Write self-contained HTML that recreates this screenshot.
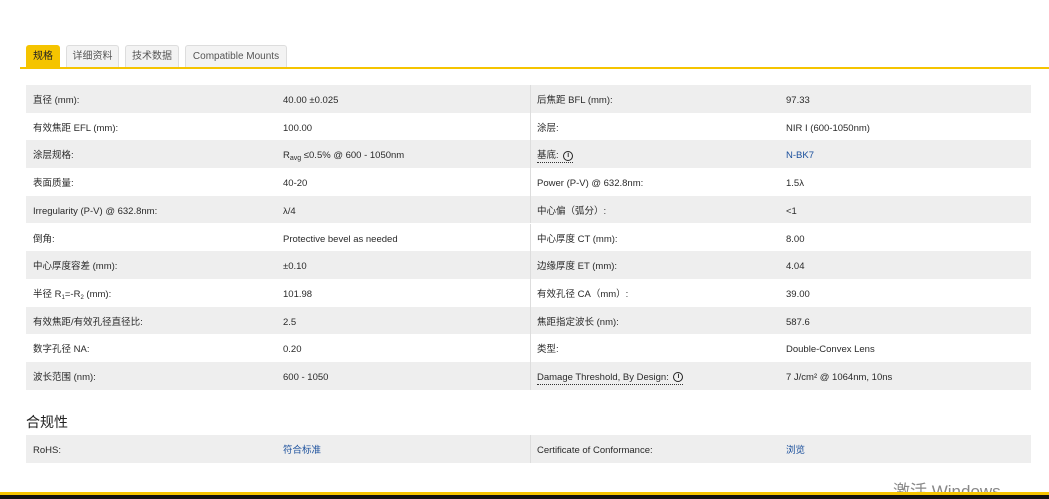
<!DOCTYPE html>
<html><head><meta charset="utf-8"><style>
body{margin:0;width:1049px;height:499px;overflow:hidden;background:#fff;font-family:"Liberation Sans","Noto Sans CJK SC",sans-serif;color:#2a2a2a;position:relative}
.tab{position:absolute;top:45px;height:23px;box-sizing:border-box;border:1px solid #ddd;border-bottom:none;background:#f3f3f3;font-size:10px;color:#555;line-height:22px;text-align:center;border-radius:3px 3px 0 0}
.tab.a{background:#f5c400;border-color:#f5c400;color:#222}
.line{position:absolute;left:20px;right:0;top:67px;height:2px;background:#f5c400}
.row{position:absolute;left:26px;width:1005px;height:27.7px;font-size:9.5px;line-height:27.7px}
.row.g{background:#eeeeee}
.row span{position:absolute;top:2px;white-space:nowrap}
sub{line-height:0;vertical-align:-2px}
.c1{left:7px}.c2{left:257px}.c3{left:511px}.c4{left:760px}
.div{position:absolute;left:504px;top:0;bottom:0;width:1px;background:#ddd}
.lnk{color:#1a4f9c}
.u b{font-weight:normal;border-bottom:1px dotted #333;padding-bottom:1px}
.i{display:inline-block;width:8px;height:8px;border:1.3px solid #222;border-radius:50%;font-size:7px;line-height:8px;text-align:center;font-weight:bold;vertical-align:middle;margin-left:2px;font-style:normal}
</style></head><body>
<div class="tab a" style="left:26px;width:34px">规格</div>
<div class="tab" style="left:66px;width:53px">详细资料</div>
<div class="tab" style="left:125px;width:54px">技术数据</div>
<div class="tab" style="left:185px;width:102px">Compatible Mounts</div>
<div class="line"></div>

<div class="row g" style="top:85px"><div class="div"></div><span class="c1">直径 (mm):</span><span class="c2">40.00 ±0.025</span><span class="c3">后焦距 BFL (mm):</span><span class="c4">97.33</span></div>
<div class="row" style="top:112.7px"><div class="div"></div><span class="c1">有效焦距 EFL (mm):</span><span class="c2">100.00</span><span class="c3">涂层:</span><span class="c4">NIR I (600-1050nm)</span></div>
<div class="row g" style="top:140.4px"><div class="div"></div><span class="c1">涂层规格:</span><span class="c2">R<sub style="font-size:7px">avg</sub> ≤0.5% @ 600 - 1050nm</span><span class="c3 u"><b>基底: <i class="i">i</i></b></span><span class="c4 lnk">N-BK7</span></div>
<div class="row" style="top:168.1px"><div class="div"></div><span class="c1">表面质量:</span><span class="c2">40-20</span><span class="c3">Power (P-V) @ 632.8nm:</span><span class="c4">1.5λ</span></div>
<div class="row g" style="top:195.8px"><div class="div"></div><span class="c1">Irregularity (P-V) @ 632.8nm:</span><span class="c2">λ/4</span><span class="c3">中心偏（弧分）:</span><span class="c4">&lt;1</span></div>
<div class="row" style="top:223.5px"><div class="div"></div><span class="c1">倒角:</span><span class="c2">Protective bevel as needed</span><span class="c3">中心厚度 CT (mm):</span><span class="c4">8.00</span></div>
<div class="row g" style="top:251.2px"><div class="div"></div><span class="c1">中心厚度容差 (mm):</span><span class="c2">±0.10</span><span class="c3">边缘厚度 ET (mm):</span><span class="c4">4.04</span></div>
<div class="row" style="top:278.9px"><div class="div"></div><span class="c1">半径 R<sub style="font-size:6px">1</sub>=-R<sub style="font-size:6px">2</sub> (mm):</span><span class="c2">101.98</span><span class="c3">有效孔径 CA（mm）:</span><span class="c4">39.00</span></div>
<div class="row g" style="top:306.6px"><div class="div"></div><span class="c1">有效焦距/有效孔径直径比:</span><span class="c2">2.5</span><span class="c3">焦距指定波长 (nm):</span><span class="c4">587.6</span></div>
<div class="row" style="top:334.3px"><div class="div"></div><span class="c1">数字孔径 NA:</span><span class="c2">0.20</span><span class="c3">类型:</span><span class="c4">Double-Convex Lens</span></div>
<div class="row g" style="top:362px"><div class="div"></div><span class="c1">波长范围 (nm):</span><span class="c2">600 - 1050</span><span class="c3 u"><b>Damage Threshold, By Design: <i class="i">i</i></b></span><span class="c4">7 J/cm² @ 1064nm, 10ns</span></div>

<div style="position:absolute;left:26px;top:412px;font-size:14px;color:#222">合规性</div>
<div class="row g" style="top:435px"><div class="div"></div><span class="c1">RoHS:</span><span class="c2 lnk">符合标准</span><span class="c3">Certificate of Conformance:</span><span class="c4 lnk">浏览</span></div>

<div style="position:absolute;left:893px;top:482px;font-size:17px;color:#888;line-height:20px;height:10px;overflow:hidden">激活 Windows</div>
<div style="position:absolute;left:0;right:0;top:492px;height:3px;background:#f5c400"></div>
<div style="position:absolute;left:0;right:0;top:495px;height:4px;background:#111"></div>
</body></html>
